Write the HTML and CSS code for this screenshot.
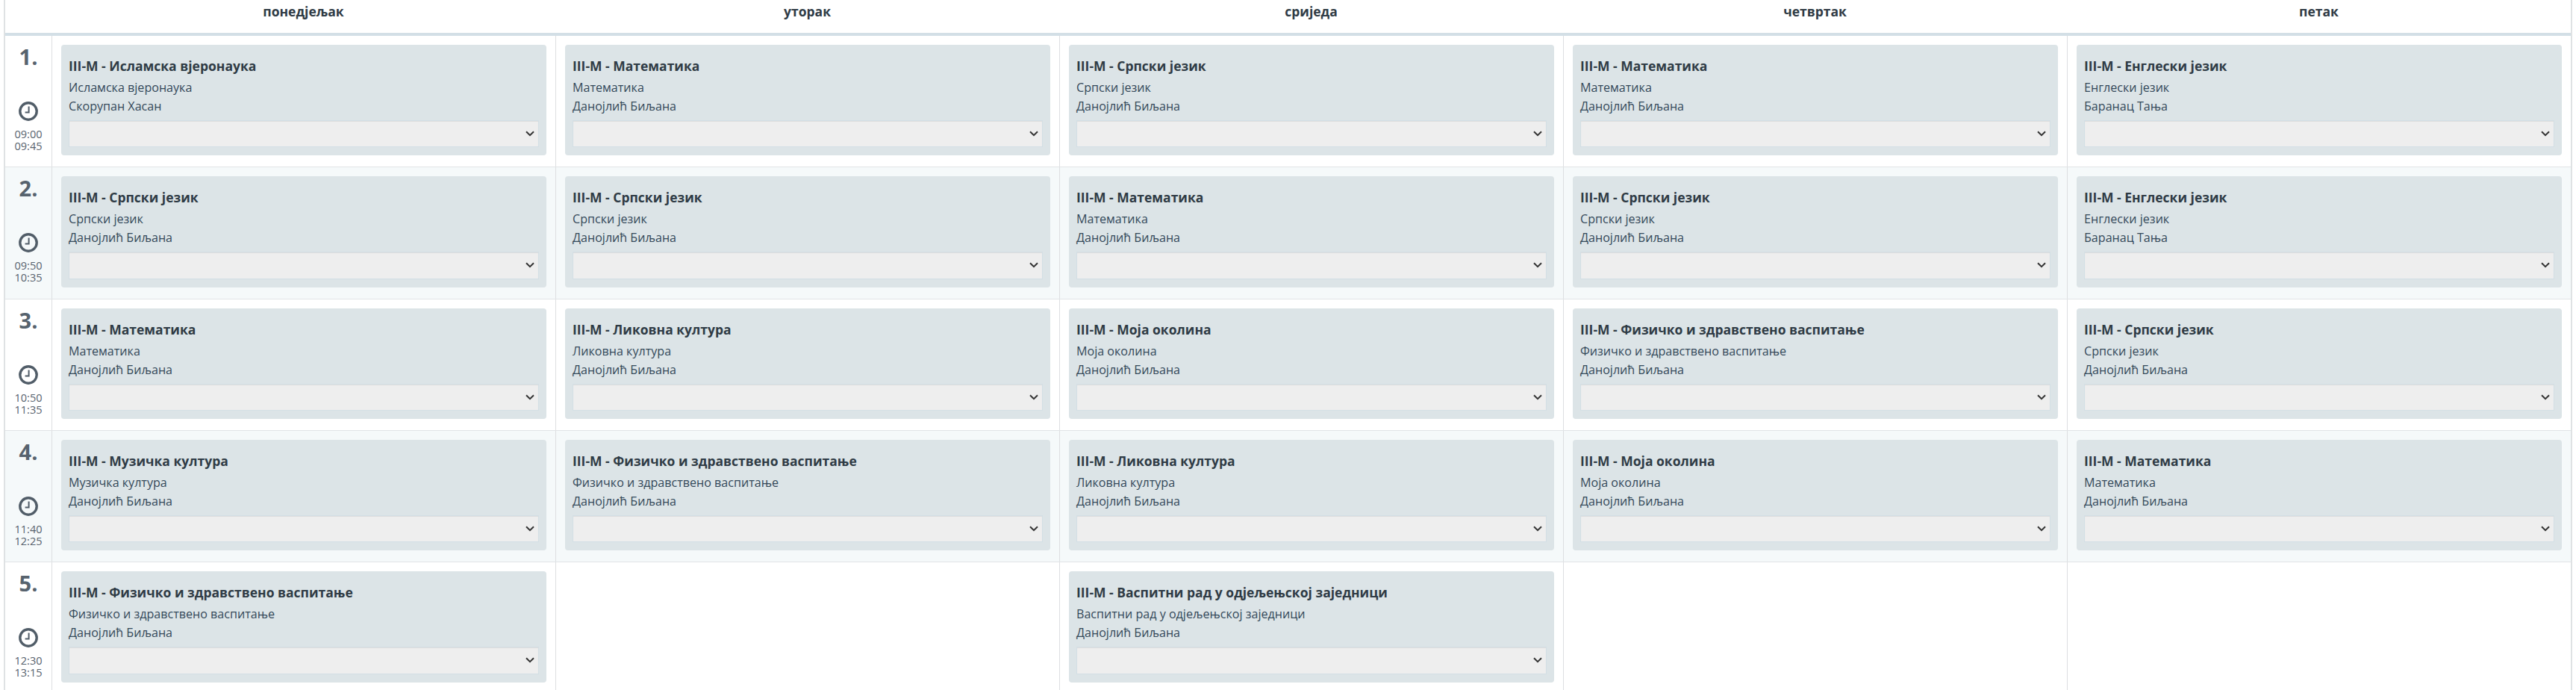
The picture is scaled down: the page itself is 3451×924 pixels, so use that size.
FILE: index.html
```html
<!DOCTYPE html>
<html lang="sr">
<head>
<meta charset="utf-8">
<title>Распоред часова</title>
<link rel="stylesheet" href="styles.css">
</head>
<body>
<svg class="defs" width="0" height="0" aria-hidden="true"><symbol id="clock" viewBox="0 0 26 26"><circle cx="13" cy="13" r="11.2" fill="none" stroke="currentColor" stroke-width="3.4"/><path d="M13.6 6.5V14.4H8.6" fill="none" stroke="currentColor" stroke-width="2"/></symbol></svg>
<main class="timetable">
  <div class="row head">
    <div class="corner"></div>
    <div class="day">понедјељак</div>
    <div class="day">уторак</div>
    <div class="day">сриједа</div>
    <div class="day">четвртак</div>
    <div class="day">петак</div>
  </div>

  <div class="row">
    <div class="slot"><div class="num">1.</div><svg class="clock"><use href="#clock"/></svg><div class="time">09:00<br>09:45</div></div>
    <div class="cell"><div class="card"><h4>III-M - Исламска вјеронаука</h4><p>Исламска вјеронаука</p><p>Скорупан Хасан</p><select class="pick"></select></div></div>
    <div class="cell"><div class="card"><h4>III-M - Математика</h4><p>Математика</p><p>Данојлић Биљана</p><select class="pick"></select></div></div>
    <div class="cell"><div class="card"><h4>III-M - Српски језик</h4><p>Српски језик</p><p>Данојлић Биљана</p><select class="pick"></select></div></div>
    <div class="cell"><div class="card"><h4>III-M - Математика</h4><p>Математика</p><p>Данојлић Биљана</p><select class="pick"></select></div></div>
    <div class="cell"><div class="card"><h4>III-M - Енглески језик</h4><p>Енглески језик</p><p>Баранац Тања</p><select class="pick"></select></div></div>
  </div>

  <div class="row alt">
    <div class="slot"><div class="num">2.</div><svg class="clock"><use href="#clock"/></svg><div class="time">09:50<br>10:35</div></div>
    <div class="cell"><div class="card"><h4>III-M - Српски језик</h4><p>Српски језик</p><p>Данојлић Биљана</p><select class="pick"></select></div></div>
    <div class="cell"><div class="card"><h4>III-M - Српски језик</h4><p>Српски језик</p><p>Данојлић Биљана</p><select class="pick"></select></div></div>
    <div class="cell"><div class="card"><h4>III-M - Математика</h4><p>Математика</p><p>Данојлић Биљана</p><select class="pick"></select></div></div>
    <div class="cell"><div class="card"><h4>III-M - Српски језик</h4><p>Српски језик</p><p>Данојлић Биљана</p><select class="pick"></select></div></div>
    <div class="cell"><div class="card"><h4>III-M - Енглески језик</h4><p>Енглески језик</p><p>Баранац Тања</p><select class="pick"></select></div></div>
  </div>

  <div class="row">
    <div class="slot"><div class="num">3.</div><svg class="clock"><use href="#clock"/></svg><div class="time">10:50<br>11:35</div></div>
    <div class="cell"><div class="card"><h4>III-M - Математика</h4><p>Математика</p><p>Данојлић Биљана</p><select class="pick"></select></div></div>
    <div class="cell"><div class="card"><h4>III-M - Ликовна култура</h4><p>Ликовна култура</p><p>Данојлић Биљана</p><select class="pick"></select></div></div>
    <div class="cell"><div class="card"><h4>III-M - Моја околина</h4><p>Моја околина</p><p>Данојлић Биљана</p><select class="pick"></select></div></div>
    <div class="cell"><div class="card"><h4>III-M - Физичко и здравствено васпитање</h4><p>Физичко и здравствено васпитање</p><p>Данојлић Биљана</p><select class="pick"></select></div></div>
    <div class="cell"><div class="card"><h4>III-M - Српски језик</h4><p>Српски језик</p><p>Данојлић Биљана</p><select class="pick"></select></div></div>
  </div>

  <div class="row alt">
    <div class="slot"><div class="num">4.</div><svg class="clock"><use href="#clock"/></svg><div class="time">11:40<br>12:25</div></div>
    <div class="cell"><div class="card"><h4>III-M - Музичка култура</h4><p>Музичка култура</p><p>Данојлић Биљана</p><select class="pick"></select></div></div>
    <div class="cell"><div class="card"><h4>III-M - Физичко и здравствено васпитање</h4><p>Физичко и здравствено васпитање</p><p>Данојлић Биљана</p><select class="pick"></select></div></div>
    <div class="cell"><div class="card"><h4>III-M - Ликовна култура</h4><p>Ликовна култура</p><p>Данојлић Биљана</p><select class="pick"></select></div></div>
    <div class="cell"><div class="card"><h4>III-M - Моја околина</h4><p>Моја околина</p><p>Данојлић Биљана</p><select class="pick"></select></div></div>
    <div class="cell"><div class="card"><h4>III-M - Математика</h4><p>Математика</p><p>Данојлић Биљана</p><select class="pick"></select></div></div>
  </div>

  <div class="row">
    <div class="slot"><div class="num">5.</div><svg class="clock"><use href="#clock"/></svg><div class="time">12:30<br>13:15</div></div>
    <div class="cell"><div class="card"><h4>III-M - Физичко и здравствено васпитање</h4><p>Физичко и здравствено васпитање</p><p>Данојлић Биљана</p><select class="pick"></select></div></div>
    <div class="cell"></div>
    <div class="cell"><div class="card"><h4>III-M - Васпитни рад у одјељењској заједници</h4><p>Васпитни рад у одјељењској заједници</p><p>Данојлић Биљана</p><select class="pick"></select></div></div>
    <div class="cell"></div>
    <div class="cell"></div>
  </div>
</main>
</body>
</html>
```
FILE: styles.css
```css
html, body {
  margin: 0;
  height: 924px;
  overflow: hidden;
  background: #fff;
}
body {
  padding-left: 5px;
  font-family: "Open Sans", "Noto Sans", sans-serif;
  color: #2f3b45;
}
.defs { position: absolute; }
.timetable {
  width: 3441px;
  box-sizing: border-box;
  height: 924px;
  border-left: 2px solid #dfe2e4;
  border-right: 2px solid #dfe2e4;
}
.row {
  display: grid;
  grid-template-columns: 62px repeat(5, 675px);
  border-bottom: 1px solid #e1e4e6;
}
.row.head {
  height: 44px;
  border-bottom: 4px solid #d3dfe6;
}
.row.alt { background: #f5f9fa; }
.day {
  padding-top: 5px;
  text-align: center;
  font-size: 17.5px;
  font-weight: 700;
  line-height: 20px;
}
.slot {
  display: flex;
  flex-direction: column;
  align-items: center;
  color: #57636e;
  padding-top: 8px;
}
.num {
  font-size: 29px;
  font-weight: 700;
  line-height: 39px;
}
.clock {
  width: 26px;
  height: 26px;
  margin-top: 41px;
  color: #515d68;
}
.time {
  margin-top: 10px;
  font-size: 14.5px;
  line-height: 16px;
  text-align: center;
}
.cell {
  border-left: 1px solid #dddfe1;
  padding: 12px 12px 15px;
}
.card {
  box-sizing: border-box;
  height: 148.33px;
  padding: 18px 10px 0;
  background: #dce4e7;
  border-radius: 4px;
}
.card h4 {
  margin: 0 0 7px;
  font-size: 17.5px;
  font-weight: 700;
  line-height: 20px;
}
.card p {
  margin: 0;
  font-size: 16.1px;
  line-height: 25px;
  color: #34495a;
}
.pick {
  display: block;
  box-sizing: border-box;
  width: 100%;
  height: 36.33px;
  margin-top: 6px;
  padding: 6px 12px;
  appearance: none;
  background-color: #eeeeee;
  background-image: url("data:image/svg+xml,%3Csvg xmlns='http://www.w3.org/2000/svg' width='12' height='8' viewBox='0 0 12 8'%3E%3Cpath d='M1 1.2L6 6.2L11 1.2' fill='none' stroke='%23333' stroke-width='2'/%3E%3C/svg%3E");
  background-repeat: no-repeat;
  background-position: right 5px center;
  border: 1px solid #d3dfe5;
  border-radius: 0;
  box-shadow: inset 0 1px 1px rgba(0, 0, 0, 0.075);
  font-family: inherit;
  font-size: 16px;
  color: #333;
}
```
